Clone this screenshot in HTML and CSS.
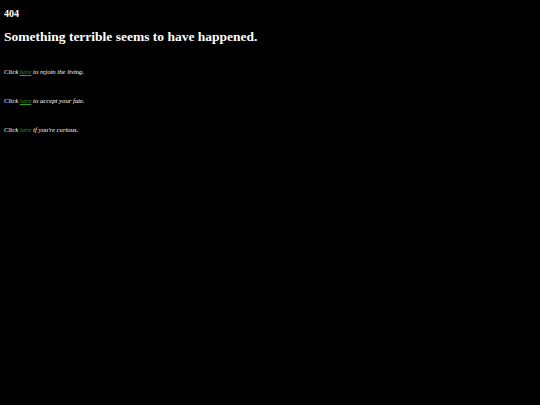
FILE: index.html
```html
<!DOCTYPE html>
<html>
<head>
<meta charset="utf-8">
<link rel="stylesheet" href="styles.css">
</head>
<body>
<h3 class="code">404</h3>
<h1 class="title">Something terrible seems to have happened.</h1>
<p class="line">Click <a href="#">here</a> to rejoin the living.</p>
<p class="line">Click <a href="#">here</a> to accept your fate.</p>
<p class="line">Click <a href="#">here</a> if you're curious.</p>
</body>
</html>
```
FILE: styles.css
```css
html, body {
  background: #000;
}
body {
  margin: 4px;
  color: #fff;
  font-family: "Liberation Serif", serif;
}
.code {
  font-size: 10px;
  margin: 4px 0 0 0;
}
.title {
  font-size: 13.5px;
  margin: 10px 0 0 0;
}
.line {
  font-size: 6.7px;
  font-style: italic;
  margin: 22px 0 0 0;
}
.title + .line {
  margin-top: 23px;
}
.line a {
  color: #2e9a2e;
}
```
